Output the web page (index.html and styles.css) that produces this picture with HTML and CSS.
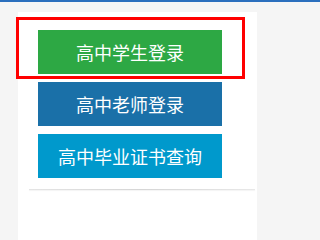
FILE: index.html
```html
<!DOCTYPE html>
<html lang="zh-CN">
<head>
<meta charset="utf-8">
<link rel="stylesheet" href="styles.css">
</head>
<body>
<div class="topbar"></div>
<div class="panel">
  <div class="buttons">
    <a class="btn btn-green">高中学生登录</a>
    <a class="btn btn-blue">高中老师登录</a>
    <a class="btn btn-cyan">高中毕业证书查询</a>
  </div>
  <div class="divider"></div>
  <div class="highlight"></div>
</div>
</body>
</html>
```
FILE: styles.css
```css
html, body {
  margin: 0;
  padding: 0;
  height: 100%;
}
body {
  display: flex;
  flex-direction: column;
  background: #f5f5f5;
  font-family: "Noto Sans CJK SC", "Liberation Sans", sans-serif;
  overflow: hidden;
}
.topbar {
  height: 2px;
  flex: none;
  background: #2b6fbd;
}
.panel {
  position: relative;
  flex: 1;
  margin: 10px 0 0 18px;
  width: 239px;
  background: #ffffff;
  padding-top: 18px;
  box-sizing: border-box;
}
.buttons {
  display: flex;
  flex-direction: column;
  gap: 8px;
  padding-left: 20px;
}
.btn {
  display: flex;
  align-items: center;
  justify-content: center;
  width: 184px;
  height: 44px;
  color: #ffffff;
  font-size: 18px;
  line-height: 1;
  text-decoration: none;
}
.btn-green { background: #2da844; }
.btn-blue { background: #1a70a8; }
.btn-cyan { background: #0099cc; }
.divider {
  margin: 11px 2px 0 11px;
  height: 1px;
  background: linear-gradient(to right, #e4e4e4, #d6d6d6 50%, #e8e8e8);
  box-shadow: 0 1px 1px rgba(0,0,0,0.05);
}
.highlight {
  position: absolute;
  left: -2px;
  top: 5px;
  width: 229px;
  height: 62px;
  border: 3px solid #ff0000;
  box-sizing: border-box;
}
```
